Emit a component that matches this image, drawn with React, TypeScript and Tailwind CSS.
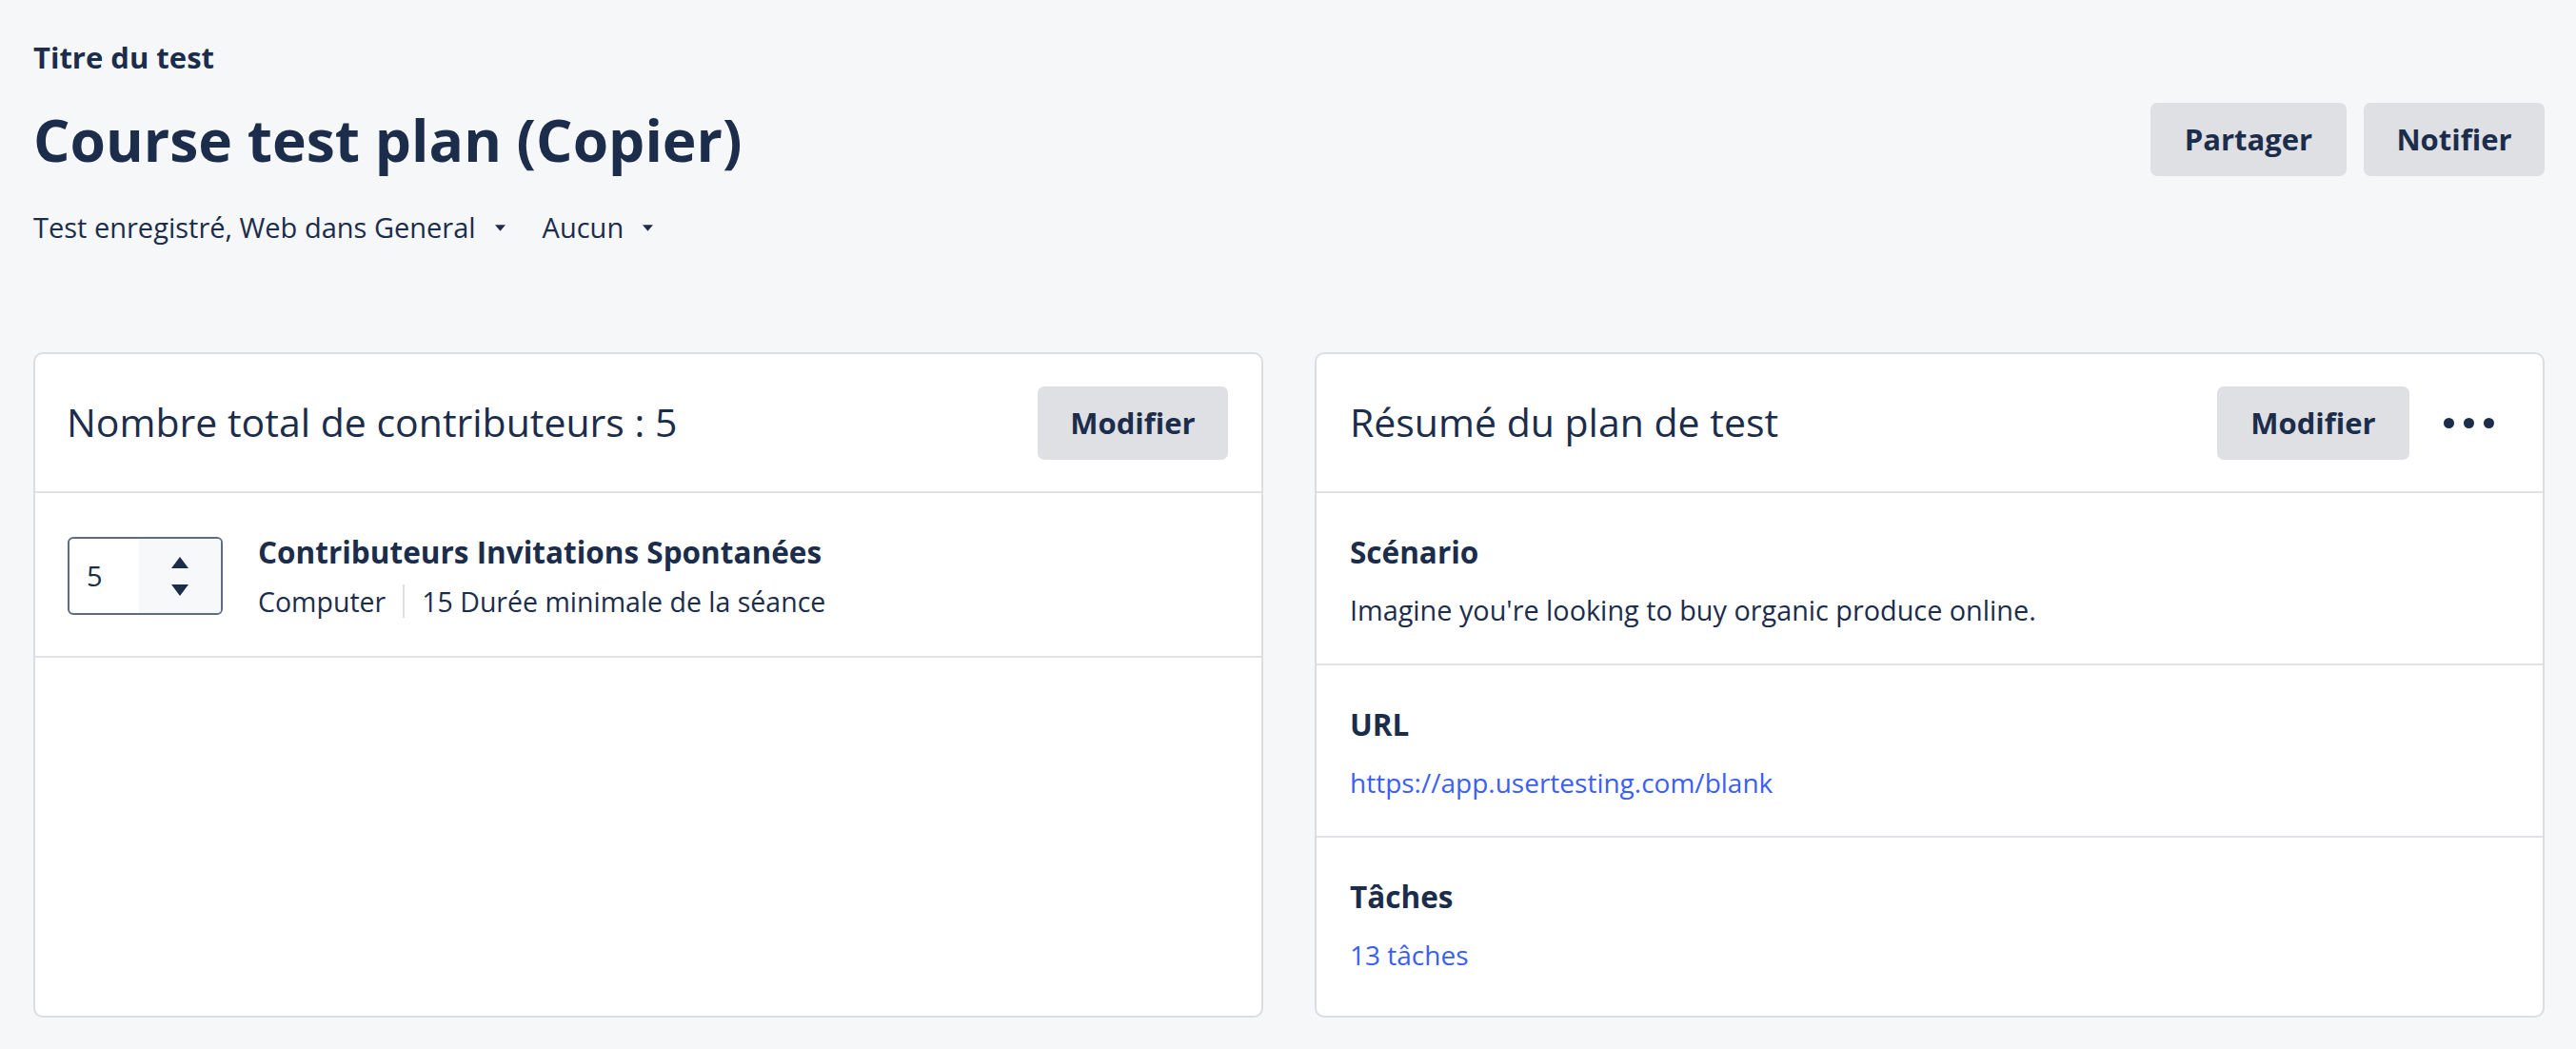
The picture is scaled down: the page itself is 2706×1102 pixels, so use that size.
import React from 'react';

// --- Test plan overview page ---

const NAVY = 'text-[#1b2d4b]';

function Caret({ className }: { className?: string }) {
  return (
    <svg viewBox="0 0 10 6" className={className} fill="currentColor">
      <path d="M0 0h10L5 6z" />
    </svg>
  );
}

function GrayButton({ children, className = '' }: { children: React.ReactNode; className?: string }) {
  return (
    <button
      className={`h-[77px] rounded-[7px] bg-[#dfe0e4] text-[31px] font-bold ${NAVY} ${className}`}
    >
      {children}
    </button>
  );
}

function NumberStepper({ value }: { value: number }) {
  return (
    <div className="flex h-[82px] w-[163px] shrink-0 overflow-hidden rounded-[6px] border-2 border-[#5f6b80] bg-white">
      <div className={`flex w-[73px] items-center pl-[18px] text-[29px] ${NAVY}`}>{value}</div>
      <div className={`flex flex-1 flex-col items-center justify-center gap-[17px] bg-[#f7f8fa] ${NAVY}`}>
        <svg viewBox="0 0 18 12" className="h-[12px] w-[18px]" fill="currentColor">
          <path d="M9 0l9 12H0z" />
        </svg>
        <svg viewBox="0 0 18 12" className="h-[12px] w-[18px]" fill="currentColor">
          <path d="M0 0h18L9 12z" />
        </svg>
      </div>
    </div>
  );
}

function Section({ label, children, last = false }: { label: string; children: React.ReactNode; last?: boolean }) {
  return (
    <div className={`px-[35px] pt-[43px] ${last ? 'pb-[47px]' : 'pb-[39px] border-b-2 border-[#e1e2e6]'}`}>
      <div className={`text-[31.5px] font-bold leading-[38px] ${NAVY}`}>{label}</div>
      <div className="mt-[25px] text-[28.8px] leading-[34px]">{children}</div>
    </div>
  );
}

export default function App() {
  return (
    <div
      className={`min-h-[1102px] bg-[#f6f7f9] pl-[35px] pr-[33px] pt-[43px] ${NAVY}`}
      style={{ fontFamily: "'Open Sans', Lato, sans-serif" }}
    >
      <div className="text-[31px] font-bold leading-[34px]">Titre du test</div>

      <div className="mt-[31px] flex items-center justify-between">
        <h1 className="text-[60.5px] font-bold leading-[77px]">Course test plan (Copier)</h1>
        <div className="flex gap-[18px]">
          <GrayButton className="w-[206px]">Partager</GrayButton>
          <GrayButton className="w-[190px]">Notifier</GrayButton>
        </div>
      </div>

      <div className="mt-[37px] flex items-center text-[29px] leading-[34px]">
        <span>Test enregistré, Web dans General</span>
        <Caret className="ml-[20px] h-[7px] w-[11px]" />
        <span className="ml-[39px]">Aucun</span>
        <Caret className="ml-[20px] h-[7px] w-[11px]" />
      </div>

      <div className="mt-[114px] grid grid-cols-2 items-stretch gap-[54px]">
        {/* contributors card */}
        <div className="flex flex-col overflow-hidden rounded-[10px] border-2 border-[#dcdde2] bg-white">
          <div className="flex h-[146px] items-center justify-between border-b-2 border-[#e1e2e6] pl-[33px] pr-[35px]">
            <div className="text-[41px]">Nombre total de contributeurs : 5</div>
            <GrayButton className="h-[76px] w-[200px]">Modifier</GrayButton>
          </div>
          <div className="flex items-center border-b-2 border-[#e1e2e6] pb-[40px] pl-[34px] pt-[43px]">
            <NumberStepper value={5} />
            <div className="ml-[37px]">
              <div className="text-[31.5px] font-bold leading-[38px]">Contributeurs Invitations Spontanées</div>
              <div className="mt-[15px] flex items-center text-[28.5px] leading-[34px]">
                <span>Computer</span>
                <span className="mx-[18px] h-[35px] w-[2px] bg-[#dcdee2]" />
                <span>15 Durée minimale de la séance</span>
              </div>
            </div>
          </div>
        </div>

        {/* summary card */}
        <div className="flex flex-col overflow-hidden rounded-[10px] border-2 border-[#dcdde2] bg-white">
          <div className="flex h-[146px] items-center border-b-2 border-[#e1e2e6] pl-[35px] pr-[35px]">
            <div className="flex-1 text-[41px]">Résumé du plan de test</div>
            <GrayButton className="h-[76px] w-[202px]">Modifier</GrayButton>
            <button className="ml-[20px] flex items-center gap-[10px] px-[16px] py-[20px]">
              <span className="h-[11px] w-[11px] rounded-full bg-[#1b2d4b]" />
              <span className="h-[11px] w-[11px] rounded-full bg-[#1b2d4b]" />
              <span className="h-[11px] w-[11px] rounded-full bg-[#1b2d4b]" />
            </button>
          </div>
          <Section label="Scénario">Imagine you're looking to buy organic produce online.</Section>
          <Section label="URL">
            <a className="text-[28px] text-[#3b5ef5]">https://app.usertesting.com/blank</a>
          </Section>
          <Section label="Tâches" last>
            <a className="text-[28px] text-[#3b5ef5]">13 tâches</a>
          </Section>
        </div>
      </div>
    </div>
  );
}
